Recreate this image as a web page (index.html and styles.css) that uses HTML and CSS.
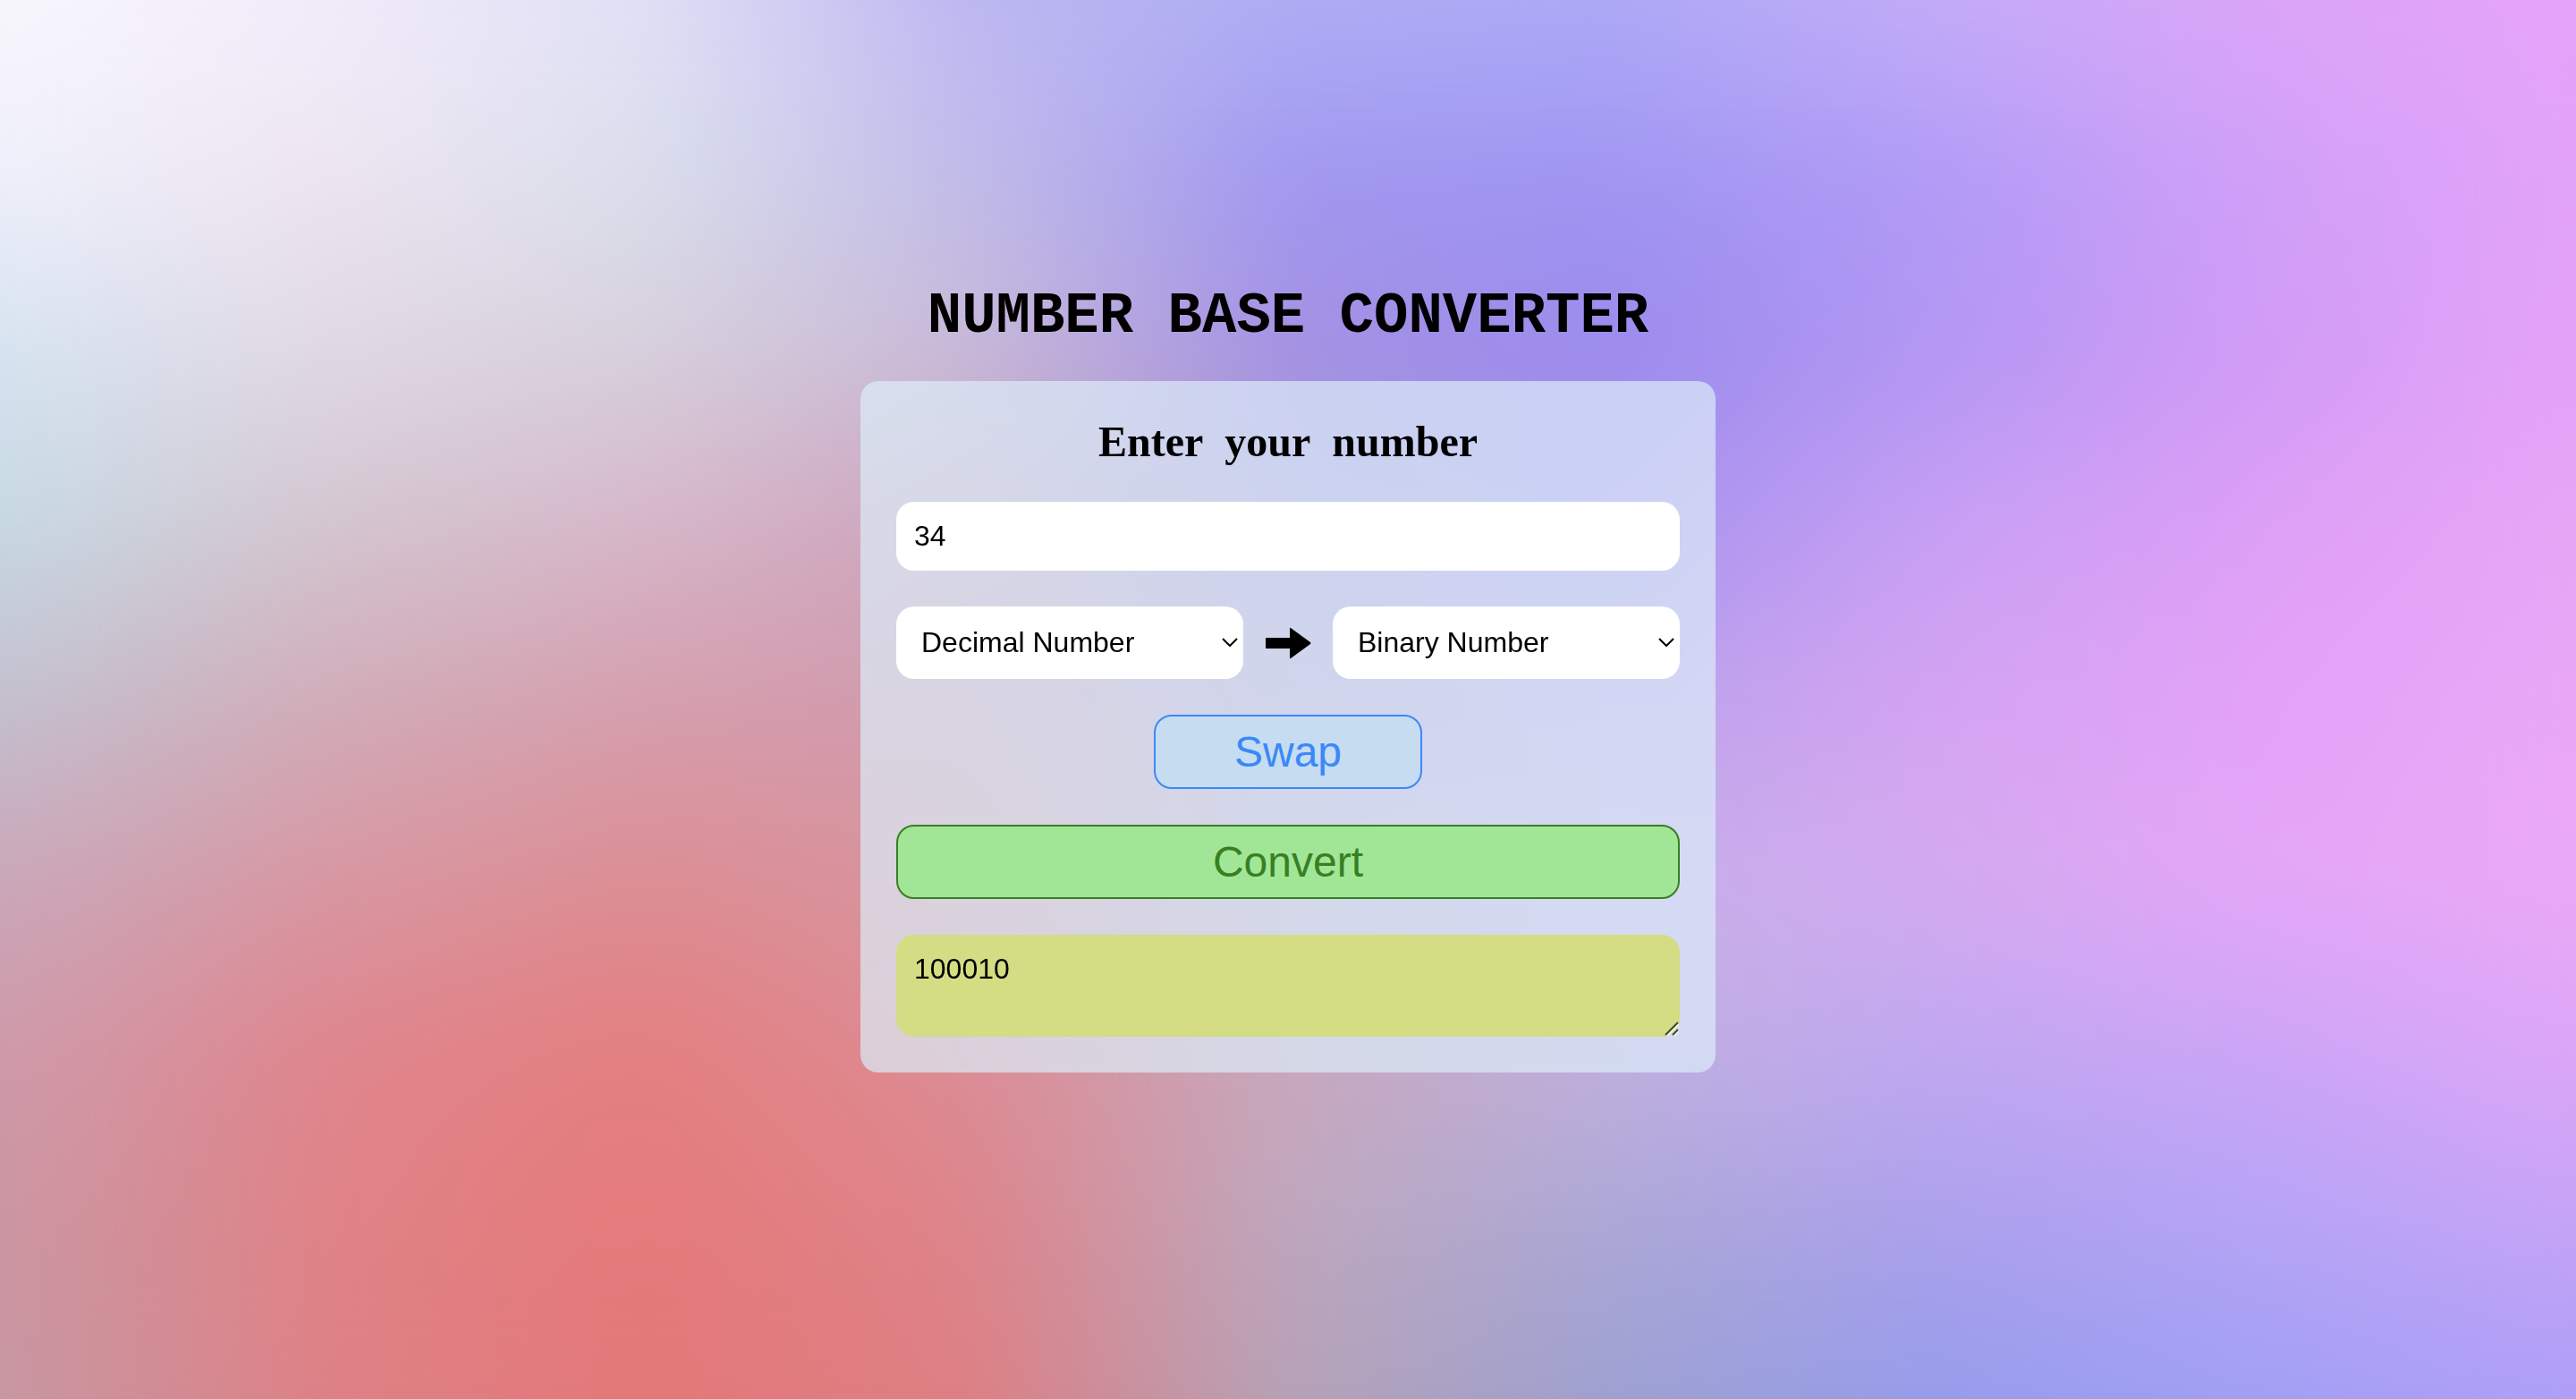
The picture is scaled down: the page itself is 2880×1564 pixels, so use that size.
FILE: index.html
```html
<!DOCTYPE html>
<html lang="en">
<head>
  <meta charset="utf-8">
  <meta name="viewport" content="width=device-width, initial-scale=1">
  <title>Number Base Converter</title>
  <link rel="stylesheet" href="styles.css">
</head>
<body>
  <div class="backdrop" aria-hidden="true">
    <div class="band band-1"></div>
    <div class="band band-2"></div>
    <div class="band band-3"></div>
    <div class="band band-4"></div>
    <div class="band band-5"></div>
    <div class="band band-6"></div>
    <div class="band band-7"></div>
    <div class="band band-8"></div>
    <div class="band band-9"></div>
  </div>
  <main class="page">
    <h1 class="title">NUMBER BASE CONVERTER</h1>
    <form class="card">
      <label class="prompt" for="number">Enter&nbsp; your&nbsp; number</label>
      <input class="field" id="number" type="text" value="34">
      <div class="bases">
        <div class="picker">
          <select class="select" id="from" aria-label="Convert from">
            <option>Binary Number</option>
            <option selected>Decimal Number</option>
            <option>Octal Number</option>
            <option>Hexadecimal Number</option>
          </select>
          <svg class="chevron" viewBox="0 0 18 10" aria-hidden="true"><path d="M1 1l8 8 8-8"/></svg>
        </div>
        <svg class="arrow" viewBox="0 0 52 36" aria-hidden="true"><path d="M2 12h26V1.500q0-1 1-.5L51 17q1 1 0 2L29 35q-1 .5-1-.5V24H2q-1 0-1-1V13q0-1 1-1z"/></svg>
        <div class="picker">
          <select class="select" id="to" aria-label="Convert to">
            <option selected>Binary Number</option>
            <option>Decimal Number</option>
            <option>Octal Number</option>
            <option>Hexadecimal Number</option>
          </select>
          <svg class="chevron" viewBox="0 0 18 10" aria-hidden="true"><path d="M1 1l8 8 8-8"/></svg>
        </div>
      </div>
      <button class="button button-swap" type="button">Swap</button>
      <button class="button button-convert" type="button">Convert</button>
      <div class="result">
        <textarea class="output" rows="2" aria-label="Result">100010</textarea>
        <svg class="grip" viewBox="0 0 16 16" aria-hidden="true"><path class="grip-light" d="M3 16L16 3M11 16l5-5"/><path class="grip-dark" d="M1 15L15 1M9 15l6-6"/></svg>
      </div>
    </form>
  </main>
</body>
</html>
```
FILE: styles.css
```css
* {
  box-sizing: border-box;
}

body {
  position: relative;
  min-height: 100vh;
  margin: 0;
  font-family: "Liberation Sans", Arial, sans-serif;
  color: #000;
}

/* Colour mesh: each band is a row of colours that fades in over the one above */
.backdrop {
  position: absolute;
  inset: 0;
  overflow: hidden;
}

.band {
  position: absolute;
  inset: 0;
}

/* Softens the seams between the bands */
.backdrop::after {
  content: "";
  position: absolute;
  inset: 0;
  backdrop-filter: blur(50px);
}

.band-1 { background: linear-gradient(90deg, #f9f7fd, #f1edfb, #e2e0f6, #bdb8f2, #b0aff4, #aeabf6, #c4aef8, #dba5f8, #e6a4fa); }
.band-2 { background: linear-gradient(90deg, #eef0fb, #eee5f1, #dadfec, #c1bce9, #a097f0, #9f95f2, #b09bf6, #cfa0f8, #e3a3f9); mask-image: linear-gradient(transparent 0%, #000 12.5%); }
.band-3 { background: linear-gradient(90deg, #d6e4f1, #e0d9e5, #d7d0dc, #c8bad8, #a491e2, #9b8aec, #b297f3, #d09bf6, #e4a3f8); mask-image: linear-gradient(transparent 12.5%, #000 25%); }
.band-4 { background: linear-gradient(90deg, #c6dae4, #d3c6d0, #d6b7ca, #cda3bb, #a898d8, #a792ee, #c6a0f4, #dd9ff6, #e7a7f6); mask-image: linear-gradient(transparent 25%, #000 37.5%); }
.band-5 { background: linear-gradient(90deg, #c3c1d0, #d0adb9, #d59fae, #d09aae, #b9a0d0, #b9a3ea, #d4a3f2, #e2a2f7, #eaa8f7); mask-image: linear-gradient(transparent 37.5%, #000 50%); }
.band-6 { background: linear-gradient(90deg, #c9a9bb, #d798a3, #dc8e94, #d795a0, #c0a8cc, #c6aeea, #d3aaef, #e5a6f7, #ebaaf6); mask-image: linear-gradient(transparent 50%, #000 62.5%); }
.band-7 { background: linear-gradient(90deg, #ce9bab, #df868e, #e47f80, #dc8d95, #c8a8bc, #c0b0de, #c0a8f1, #cca5f6, #dda6f8); mask-image: linear-gradient(transparent 62.5%, #000 75%); }
.band-8 { background: linear-gradient(90deg, #ca97a3, #df8387, #e57a7a, #de848a, #bea8be, #aba8d6, #aca0ec, #b5a4f6, #c6a4f6); mask-image: linear-gradient(transparent 75%, #000 87.5%); }
.band-9 { background: linear-gradient(90deg, #c698a3, #dd8186, #e37878, #dd7f83, #b5a1b6, #9ca0d0, #949cea, #9f9ff3, #ad9ff7); mask-image: linear-gradient(transparent 87.5%, #000 100%); }

.page {
  position: relative;
  display: flex;
  flex-direction: column;
  align-items: center;
  gap: 34px;
  padding: 316px 40px 40px;
}

.title {
  margin: 0;
  font: bold 64px/76px "Liberation Mono", "Courier New", monospace;
}

.card {
  display: flex;
  flex-direction: column;
  gap: 40px;
  width: 100%;
  max-width: 956px;
  padding: 40px;
  border-radius: 20px;
  background: rgba(220, 236, 248, 0.7);
}

.prompt {
  font: bold 48px/55px "Liberation Serif", "Times New Roman", serif;
  text-align: center;
}

.field,
.select,
.output {
  display: block;
  width: 100%;
  margin: 0;
  padding: 20px;
  border: 0;
  border-radius: 20px;
  background: #fff;
  color: #000;
  font: 32px/37px "Liberation Sans", Arial, sans-serif;
}

.bases {
  display: flex;
  align-items: center;
  gap: 24px;
}

.picker {
  position: relative;
  flex: 1;
}

.select {
  appearance: none;
  padding: 22px 28px;
}

.chevron {
  position: absolute;
  top: 35px;
  right: 6px;
  width: 18px;
  height: 10px;
  fill: none;
  stroke: #000;
  stroke-width: 2;
  pointer-events: none;
}

.arrow {
  width: 52px;
  height: 36px;
}

.button {
  padding: 12px;
  border: 2px solid;
  border-radius: 20px;
  font: 48px/55px "Liberation Sans", Arial, sans-serif;
  cursor: pointer;
}

.button-swap {
  align-self: center;
  width: 300px;
  border-color: #3b88f8;
  background: #c6dcf1;
  color: #3b88f8;
}

.button-convert {
  border-color: #387f22;
  background: #a1e696;
  color: #387f22;
}

.result {
  position: relative;
}

.output {
  background: #d4dc84;
  resize: none;
}

.grip {
  position: absolute;
  right: 1px;
  bottom: 1px;
  width: 16px;
  height: 16px;
  fill: none;
  stroke-width: 2;
  pointer-events: none;
}

.grip-dark {
  stroke: #45463a;
}

.grip-light {
  stroke: #f3f3e6;
}
```
